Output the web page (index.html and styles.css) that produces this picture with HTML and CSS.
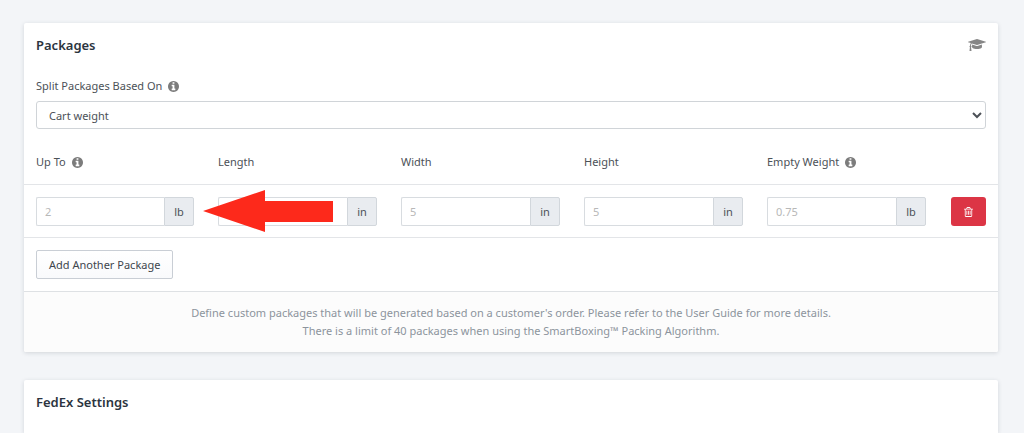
FILE: index.html
```html
<!DOCTYPE html>
<html lang="en">
<head>
    <meta charset="UTF-8">
    <meta name="viewport" content="width=device-width, initial-scale=1.0">
    <title>Packages</title>
    <link rel="stylesheet" href="styles.css">
</head>
<body>
    <svg class="sprite" aria-hidden="true">
        <symbol id="icon-info" viewBox="128 128 1536 1536">
            <path d="M1152 1376v-160q0-14-9-23t-23-9h-96v-512q0-14-9-23t-23-9h-320q-14 0-23 9t-9 23v160q0 14 9 23t23 9h96v320h-96q-14 0-23 9t-9 23v160q0 14 9 23t23 9h448q14 0 23-9t9-23zm-128-896v-160q0-14-9-23t-23-9h-192q-14 0-23 9t-9 23v160q0 14 9 23t23 9h192q14 0 23-9t9-23zm640 416q0 209-103 385.5t-279.5 279.5-385.5 103-385.5-103-279.5-279.5-103-385.5 103-385.5 279.5-279.5 385.5-103 385.5 103 279.5 279.5 103 385.5z"/>
        </symbol>
        <symbol id="icon-trash" viewBox="192 128 1408 1536">
            <path d="M704 736v576q0 14-9 23t-23 9h-64q-14 0-23-9t-9-23v-576q0-14 9-23t23-9h64q14 0 23 9t9 23zm256 0v576q0 14-9 23t-23 9h-64q-14 0-23-9t-9-23v-576q0-14 9-23t23-9h64q14 0 23 9t9 23zm256 0v576q0 14-9 23t-23 9h-64q-14 0-23-9t-9-23v-576q0-14 9-23t23-9h64q14 0 23 9t9 23zm128 724v-948h-896v948q0 22 7 40.5t14.5 27 10.5 8.5h832q3 0 10.5-8.5t14.5-27 7-40.5zm-672-1076h448l-48-117q-7-9-17-11h-317q-10 2-17 11zm928 32v64q0 14-9 23t-23 9h-96v948q0 83-47 143.5t-113 60.5h-832q-66 0-113-58.5t-47-141.5v-952h-96q-14 0-23-9t-9-23v-64q0-14 9-23t23-9h309l70-167q15-37 54-63t79-26h320q40 0 79 26t54 63l70 167h309q14 0 23 9t9 23z"/>
        </symbol>
        <symbol id="icon-cap" viewBox="0 128 2304 1536">
            <path d="M1774 836l18 316q4 69-82 128t-235 93.5-323 34.5-323-34.5-235-93.5-82-128l18-316 574 181q22 7 48 7t48-7zm530-324q0 23-22 31l-1120 352q-4 1-10 1t-10-1l-652-206q-43 34-71 111.5t-34 178.5q63 36 63 109 0 69-58 107l58 433q2 14-8 25-9 11-24 11h-192q-15 0-24-11-10-11-8-25l58-433q-58-38-58-107 0-73 65-111 11-207 98-330l-333-104q-22-8-22-31t22-31l1120-352q4-1 10-1t10 1l1120 352q22 8 22 31z"/>
        </symbol>
    </svg>

    <main class="page">
        <section class="card">
            <header class="card-header">
                <h2>Packages</h2>
                <a href="#guide" class="guide-link" aria-label="User Guide">
                    <svg class="icon-cap"><use href="#icon-cap"/></svg>
                </a>
            </header>

            <div class="form-group">
                <div class="label-row">
                    <label for="split">Split Packages Based On</label>
                    <svg class="icon-info"><use href="#icon-info"/></svg>
                </div>
                <select id="split" name="split" class="select">
                    <option>Cart weight</option>
                </select>
            </div>

            <table class="packages">
                <thead>
                    <tr>
                        <th class="first"><div class="label-row"><label for="upto">Up To</label> <svg class="icon-info"><use href="#icon-info"/></svg></div></th>
                        <th><label for="length">Length</label></th>
                        <th><label for="width">Width</label></th>
                        <th><label for="height">Height</label></th>
                        <th><div class="label-row"><label for="empty">Empty Weight</label> <svg class="icon-info"><use href="#icon-info"/></svg></div></th>
                        <th class="action"></th>
                    </tr>
                </thead>
                <tbody>
                    <tr>
                        <td>
                            <div class="input-group">
                                <input type="text" id="upto" name="upto" placeholder="2">
                                <span class="addon">lb</span>
                            </div>
                        </td>
                        <td class="pointed">
                            <div class="input-group">
                                <input type="text" id="length" name="length">
                                <span class="addon">in</span>
                            </div>
                            <svg class="arrow" viewBox="0 0 130 42" aria-hidden="true">
                                <path d="M0 21L62 0V11H130V32H62V42Z"/>
                            </svg>
                        </td>
                        <td>
                            <div class="input-group">
                                <input type="text" id="width" name="width" placeholder="5">
                                <span class="addon">in</span>
                            </div>
                        </td>
                        <td>
                            <div class="input-group">
                                <input type="text" id="height" name="height" placeholder="5">
                                <span class="addon">in</span>
                            </div>
                        </td>
                        <td>
                            <div class="input-group">
                                <input type="text" id="empty" name="empty" placeholder="0.75">
                                <span class="addon">lb</span>
                            </div>
                        </td>
                        <td>
                            <button type="button" class="btn-danger" aria-label="Delete">
                                <svg class="icon-trash"><use href="#icon-trash"/></svg>
                            </button>
                        </td>
                    </tr>
                </tbody>
            </table>

            <div class="add-row">
                <button type="button" class="btn">Add Another Package</button>
            </div>

            <footer class="card-footer">
                Define custom packages that will be generated based on a customer's order. Please refer to the User Guide for more details.<br>
                There is a limit of 40 packages when using the SmartBoxing™ Packing Algorithm.
            </footer>
        </section>

        <section class="card card-last">
            <header class="card-header">
                <h2>FedEx Settings</h2>
            </header>
        </section>
    </main>
</body>
</html>
```

FILE: styles.css
```css
* {
    box-sizing: border-box;
}

body {
    margin: 0;
    background: #f3f5f8;
    color: #4c5157;
    font-family: "Noto Sans", sans-serif;
    font-size: 11px;
    line-height: 18px;
}

input,
select,
button {
    font: inherit;
    color: inherit;
}

.sprite {
    display: none;
}

.page {
    display: flex;
    flex-direction: column;
    gap: 28px;
    min-height: 100vh;
    padding: 23px 26px 0 24px;
}

.card {
    background: #fff;
    border-radius: 2px;
    box-shadow: 0 1px 4px rgba(40, 50, 65, 0.16);
}

.card-last {
    flex: 1;
    border-radius: 2px 2px 0 0;
}

.card-header {
    display: flex;
    align-items: center;
    justify-content: space-between;
    height: 43px;
    padding: 0 12px;
}

.card-header h2 {
    margin: 0;
    color: #2b3440;
    font-size: 13px;
    font-weight: 600;
}

.guide-link {
    display: flex;
    color: #868686;
}

.icon-cap {
    width: 18px;
    height: 12px;
    fill: currentColor;
}

.icon-info {
    width: 11px;
    height: 11px;
    fill: #7c7c7c;
}

.label-row {
    display: flex;
    align-items: center;
    gap: 6px;
}

.form-group {
    padding: 11px 12px;
}

.select {
    display: block;
    width: 100%;
    height: 28px;
    margin-top: 6px;
    padding: 0 0 0 8px;
    border: 1px solid #d0d4d8;
    border-radius: 3px;
    background: #fff;
}

.packages {
    width: 100%;
    table-layout: fixed;
    border-collapse: separate;
    border-spacing: 0;
    border-bottom: 1px solid #e3e5e8;
}

.packages th {
    padding: 13px 12px;
    border-bottom: 1px solid #e3e5e8;
    font-weight: 400;
    text-align: left;
}

.packages td {
    padding: 12px 12px 11px;
}

.packages .first {
    width: 182px;
}

.packages .action {
    width: 60px;
}

.packages .pointed {
    position: relative;
}

.arrow {
    position: absolute;
    top: 5px;
    left: -3px;
    width: 130px;
    height: 42px;
    fill: #fd291b;
}

.input-group {
    display: flex;
    height: 29px;
}

.input-group input {
    flex: 1;
    min-width: 0;
    padding: 0 8px;
    border: 1px solid #d8dce0;
    border-right: 0;
    border-radius: 2px 0 0 2px;
    background: #fff;
}

.input-group input::placeholder {
    color: #b8b8b8;
}

.addon {
    display: flex;
    align-items: center;
    justify-content: center;
    width: 30px;
    border: 1px solid #d2d7dc;
    border-radius: 0 2px 2px 0;
    background: #e9ecf0;
}

.btn-danger {
    display: flex;
    align-items: center;
    justify-content: center;
    width: 35px;
    height: 29px;
    margin-left: auto;
    padding: 0;
    border: 0;
    border-radius: 3px;
    background: #dc3545;
}

.icon-trash {
    width: 9px;
    height: 10px;
    fill: #fff;
}

.add-row {
    padding: 12px;
}

.btn {
    display: block;
    height: 29px;
    padding: 0 12px;
    border: 1px solid #c9ced5;
    border-radius: 2px;
    background: linear-gradient(#fff, #f9fafc);
    color: #40464d;
}

.card-footer {
    padding: 12px;
    border-top: 1px solid #dee1e4;
    border-radius: 0 0 2px 2px;
    background: #fcfcfc;
    color: #8c949d;
    text-align: center;
}
```
